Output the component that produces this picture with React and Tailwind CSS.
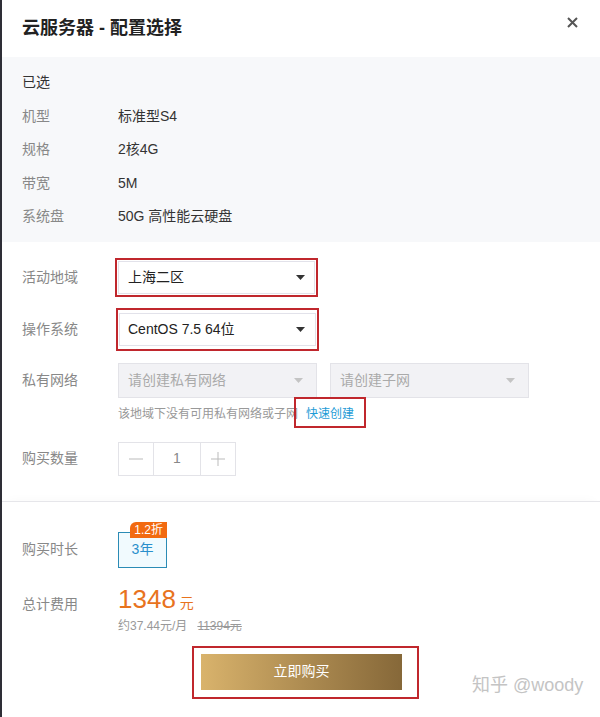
import React from "react";

const font = { fontFamily: '"Liberation Sans", Arial, "Noto Sans CJK SC", sans-serif' };

function Caret({ light }) {
  return (
    <svg width="9" height="5" viewBox="0 0 9 5" className="shrink-0">
      <path d="M0 0h9L4.5 5z" fill={light ? "#c4c4c4" : "#333"} />
    </svg>
  );
}

function InfoRow({ label, value }) {
  return (
    <div className="flex h-[33.5px] items-center">
      <span className="w-[96px] text-[#888]">{label}</span>
      <span className="text-[#333]">{value}</span>
    </div>
  );
}

function FormRow({ label, children, className = "" }) {
  return (
    <div className={`flex items-center ${className}`}>
      <span className="w-[94px] shrink-0 text-[#888]">{label}</span>
      {children}
    </div>
  );
}

export default function App() {
  return (
    <div className="flex h-[717px] w-[600px] overflow-hidden bg-white text-[14px]" style={font}>
      <div className="w-[2px] shrink-0 bg-[#2e2e36]" />
      <div className="flex min-w-0 flex-1 flex-col">
        {/* header */}
        <div className="flex h-[57px] items-center justify-between pl-[20px] pr-[22px]">
          <h1 className="text-[18px] font-bold text-[#222]">云服务器 - 配置选择</h1>
          <svg width="11" height="11" viewBox="0 0 11 11" className="-mt-[12px]">
            <path d="M1 1l9 9M10 1l-9 9" stroke="#555" strokeWidth="2" />
          </svg>
        </div>

        {/* selected summary */}
        <div className="bg-[#f7f8fa] pl-[20px] pt-[9px] pb-[8px]">
          <div className="flex h-[33.5px] items-center text-[#333]">已选</div>
          <InfoRow label="机型" value="标准型S4" />
          <InfoRow label="规格" value="2核4G" />
          <InfoRow label="带宽" value="5M" />
          <InfoRow label="系统盘" value="50G 高性能云硬盘" />
        </div>

        {/* form */}
        <div className="flex flex-col pl-[20px] pt-[16px] pb-[25px]">
          <FormRow label="活动地域">
            <div className="-ml-[1px] h-[39px] w-[203px] border-2 border-[#c0272d] p-[1px]">
              <div className="flex h-full items-center justify-between border border-[#e2e2ea] bg-white pl-[9px] pr-[9px] text-[#222]">
                <span>上海二区</span>
                <Caret />
              </div>
            </div>
          </FormRow>
          <FormRow label="操作系统" className="mt-[11px]">
            <div className="h-[43px] w-[203px] border-2 border-[#c0272d] px-[1px] py-[3px]">
              <div className="flex h-full items-center justify-between border border-[#e2e2ea] bg-white pl-[8px] pr-[10px] text-[#222]">
                <span>CentOS 7.5 64位</span>
                <Caret />
              </div>
            </div>
          </FormRow>
          <FormRow label="私有网络" className="mt-[12px]">
            <div className="ml-[2px] flex gap-[13px]">
              <div className="flex h-[35px] w-[199px] items-center justify-between border border-[#e3e3e8] bg-[#f2f2f5] pl-[9px] pr-[13px] text-[#aaa]">
                <span>请创建私有网络</span>
                <Caret light />
              </div>
              <div className="flex h-[35px] w-[199px] items-center justify-between border border-[#e3e3e8] bg-[#f2f2f5] pl-[9px] pr-[13px] text-[#aaa]">
                <span>请创建子网</span>
                <Caret light />
              </div>
            </div>
          </FormRow>
          <div className="ml-[96px] mt-[6px] flex h-[20px] items-center text-[12px] text-[#999]">
            <span>该地域下没有可用私有网络或子网</span>
            <span className="relative ml-[8px] text-[#1e9bd6]">
              快速创建
              <span className="absolute -left-[12px] -top-[8px] h-[31px] w-[72px] border-2 border-[#c0272d]" />
            </span>
          </div>
          <FormRow label="购买数量" className="mt-[18px]">
            <div className="ml-[2px] flex h-[34px] border border-[#e3e3e8] text-[#999]">
              <div className="flex w-[35px] items-center justify-center border-r border-[#e3e3e8]">
                <svg width="14" height="2" viewBox="0 0 14 2"><path d="M0 1h14" stroke="#bbb" /></svg>
              </div>
              <div className="flex w-[47px] items-center justify-center border-r border-[#e3e3e8] text-[#888]">1</div>
              <div className="flex w-[34px] items-center justify-center">
                <svg width="14" height="14" viewBox="0 0 14 14"><path d="M0 7h14M7 0v14" stroke="#bbb" /></svg>
              </div>
            </div>
          </FormRow>
        </div>

        {/* footer */}
        <div className="flex flex-1 flex-col border-t border-[#e6e6ea] pl-[20px] pt-[30px] shadow-[0_-6px_10px_-6px_rgba(0,0,0,0.03)]">
          <FormRow label="购买时长">
            <div className="relative ml-[2px] flex h-[36px] w-[49px] items-center justify-center border border-[#2b8bb5] bg-[#f1fafe] text-[#2a8fcc]">
              3年
              <span className="absolute -right-[1px] -top-[11px] h-[16px] rounded-tl-[6px] bg-[#f26a10] px-[4px] text-[12px] leading-[16px] text-white">1.2折</span>
            </div>
          </FormRow>
          <div className="mt-[16px] flex">
            <span className="w-[96px] pt-[5px] leading-[30px] text-[#888]">总计费用</span>
            <div className="flex flex-col">
              <div className="flex items-baseline text-[#e8731e]">
                <span className="text-[26px] leading-[30px]">1348</span>
                <span className="ml-[4px] text-[14px]">元</span>
              </div>
              <div className="mt-[3px] text-[12px] text-[#999]">
                约37.44元/月<span className="ml-[10px] line-through">11394元</span>
              </div>
            </div>
          </div>
          <div className="mt-[11px] flex items-end">
            <div className="ml-[170px] h-[53px] w-[227px] border-2 border-[#c0272d] pt-[6px] pb-[7px] pl-[7px] pr-[15px]">
              <button className="flex h-full w-full items-center justify-center bg-gradient-to-r from-[#d9b36c] to-[#866839] text-[14px] text-white">
                立即购买
              </button>
            </div>
            <span className="ml-[53px] text-[18px] text-[#c4c4c4]" style={{ textShadow: "0 0 1px #fff" }}>知乎 @woody</span>
          </div>
        </div>
      </div>
    </div>
  );
}
